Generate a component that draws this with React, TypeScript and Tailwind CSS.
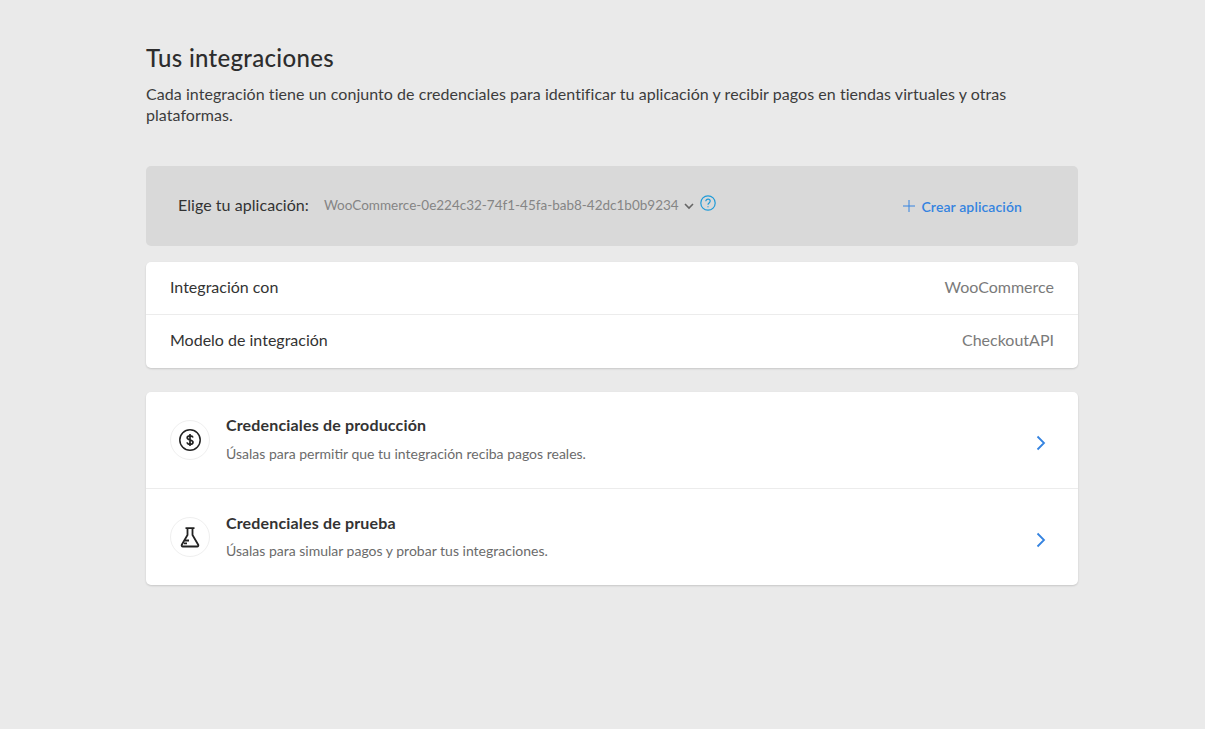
const font = "font-['Lato','Noto_Sans',sans-serif]";

const Chevron = () => (
  <svg className="ml-auto mt-[6px]" width="10" height="16" viewBox="0 0 10 16" fill="none" stroke="#3483e0" strokeWidth="1.8">
    <path d="M1.500 1.500 8 8l-6.500 6.500" />
  </svg>
);

const App = () => {
  return (
    <div className={`min-h-[729px] bg-[#eaeaea] ${font} text-[#333333]`}>
      <div className="w-[932px] ml-[146px] pt-[43px]">
        <h1 className="text-[24px] leading-[30px] font-medium tracking-[0.3px] text-[#2d2d2d]">Tus integraciones</h1>
        <p className="mt-[10px] text-[16px] leading-[21px] tracking-[0.05px] text-[#3c3c3c]">
          Cada integración tiene un conjunto de credenciales para identificar tu aplicación y recibir pagos en tiendas virtuales y otras plataformas.
        </p>

        {/* selector de aplicación */}
        <div className="mt-[41px] h-[80px] flex items-center bg-[#d9d9d9] rounded-[5px] pl-[32px] pr-[56px]">
          <span className="text-[16px] tracking-[0.05px] text-[#333333] mb-[2px]">Elige tu aplicación:</span>
          <span className="ml-[15px] text-[13.500px] text-[#858585] mb-[1px]">WooCommerce-0e224c32-74f1-45fa-bab8-42dc1b0b9234</span>
          <svg className="ml-[5px]" width="10" height="10" viewBox="0 0 10 10" fill="none" stroke="#666666" strokeWidth="1.6">
            <path d="M1 3l4 4 4-4" />
          </svg>
          <svg className="ml-[6px] -mt-[6px]" width="16" height="16" viewBox="0 0 16 16" fill="none" stroke="#1f9bd8" strokeWidth="1.2">
            <circle cx="8" cy="8" r="7.200" />
            <path d="M5.800 6.200c0-1.300 1-2.100 2.200-2.100s2.200.8 2.200 2c0 1.900-2.200 1.800-2.200 3.600" />
            <path d="M8 11.200v1.100" />
          </svg>
          <div className="ml-auto flex items-center gap-[6px] text-[#3483e0]">
            <svg width="12" height="12" viewBox="0 0 12 12" fill="none" stroke="#3483e0" strokeWidth="1">
              <path d="M6 0v12M0 6h12" />
            </svg>
            <span className="text-[14px] font-semibold tracking-[0.12px]">Crear aplicación</span>
          </div>
        </div>

        {/* datos de la integración */}
        <div className="mt-[16px] bg-white rounded-[5px] shadow-[0_1px_2px_rgba(0,0,0,0.15)]">
          <div className="h-[53px] flex items-center justify-between px-[24px] pb-[2px] border-b border-[#ececec]">
            <span className="text-[16px] text-[#333333]">Integración con</span>
            <span className="text-[16px] text-[#7a7a7a]">WooCommerce</span>
          </div>
          <div className="h-[53px] flex items-center justify-between px-[24px] pb-[3px]">
            <span className="text-[16px] text-[#333333]">Modelo de integración</span>
            <span className="text-[16px] text-[#7a7a7a]">CheckoutAPI</span>
          </div>
        </div>

        {/* credenciales */}
        <div className="mt-[24px] bg-white rounded-[5px] shadow-[0_1px_2px_rgba(0,0,0,0.15)]">
          <div className="h-[97px] flex items-center pl-[24px] pr-[32px] border-b border-[#ececec]">
            <div className="w-[40px] h-[40px] flex items-center justify-center rounded-full border border-[#efefef]">
              <svg width="24" height="24" viewBox="0 0 24 24" fill="none" stroke="#222222" strokeWidth="1.5">
                <circle cx="12" cy="12" r="10.200" />
                <path d="M15 9.500c-.3-1.100-1.500-1.700-3-1.700-1.600 0-2.800.7-2.800 2 0 2.900 5.800 1.400 5.800 4.400 0 1.300-1.300 2.100-3 2.100-1.500 0-2.700-.7-3-1.900M12 6v12" strokeWidth="1.700" />
              </svg>
            </div>
            <div className="ml-[16px]">
              <p className="text-[16px] leading-[20px] font-bold tracking-[0.16px] text-[#333333] -mt-[2px]">Credenciales de producción</p>
              <p className="mt-[10px] text-[14px] leading-[18px] text-[#6b6b6b]">Úsalas para permitir que tu integración reciba pagos reales.</p>
            </div>
            <Chevron />
          </div>
          <div className="h-[96px] flex items-center pl-[24px] pr-[32px]">
            <div className="w-[40px] h-[40px] flex items-center justify-center rounded-full border border-[#efefef]">
              <svg width="24" height="24" viewBox="0 0 24 24" fill="none" stroke="#222222" strokeWidth="1.800">
                <path d="M7.500 3.200h9M9.500 3.200v6.800L3.800 19.700c-.5 1 .1 1.800 1 1.800h14.400c.9 0 1.500-.8 1-1.800L14.500 10V3.200" />
                <path d="M7 15.500h4M6 18.300h3" />
              </svg>
            </div>
            <div className="ml-[16px]">
              <p className="text-[16px] leading-[20px] font-bold tracking-[0.16px] text-[#333333] -mt-[2px]">Credenciales de prueba</p>
              <p className="mt-[9px] text-[14px] leading-[18px] text-[#6b6b6b]">Úsalas para simular pagos y probar tus integraciones.</p>
            </div>
            <Chevron />
          </div>
        </div>
      </div>
    </div>
  );
};

export default App;
